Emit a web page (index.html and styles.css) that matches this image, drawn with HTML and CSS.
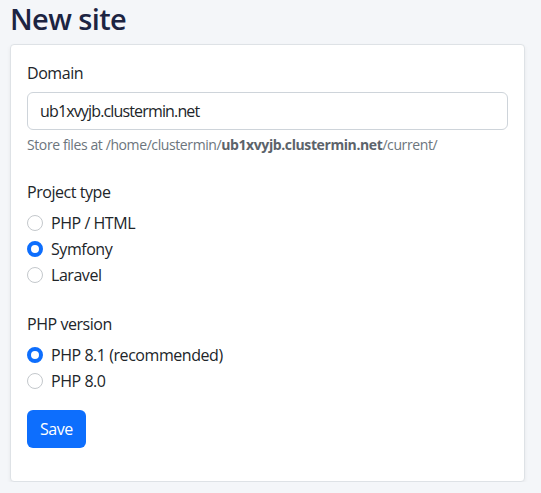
FILE: index.html
```html
<!DOCTYPE html>
<html>
<head>
    <title>New site</title>
    <link rel="stylesheet" href="styles.css">
</head>
<body>
    <h1 class="page-title">New site</h1>
    <div class="card">
        <form class="site-form">
            <div class="group">
                <label class="label" for="domain">Domain</label>
                <input class="input" id="domain" type="text" value="ub1xvyjb.clustermin.net">
                <div class="hint">Store files at /home/clustermin/<strong>ub1xvyjb.clustermin.net</strong>/current/</div>
            </div>
            <div class="group">
                <div class="label">Project type</div>
                <label class="check"><input type="radio" name="type"> PHP / HTML</label>
                <label class="check"><input type="radio" name="type" checked> Symfony</label>
                <label class="check"><input type="radio" name="type"> Laravel</label>
            </div>
            <div class="group last">
                <div class="label">PHP version</div>
                <label class="check"><input type="radio" name="php" checked> PHP 8.1 (recommended)</label>
                <label class="check"><input type="radio" name="php"> PHP 8.0</label>
            </div>
            <button type="button" class="btn">Save</button>
        </form>
    </div>
</body>
</html>
```

FILE: styles.css
```css
body {
    font-family: "Open Sans", "Noto Sans", sans-serif;
    font-size: 16px;
    letter-spacing: -0.45px;
    line-height: 1.5;
    margin: 0;
    padding: 2px 16px 0 10px;
    background-color: #f4f6f9;
    color: #212529;
}
.page-title {
    font-size: 29px;
    font-weight: 600;
    letter-spacing: -0.6px;
    line-height: 1.2;
    margin: 0 0 7px;
    color: #1c2442;
}
.card {
    background-color: #fff;
    border: 1px solid #dee2e6;
    border-radius: 4px;
    box-shadow: 0 2px 4px rgba(0, 0, 0, 0.06);
    padding: 16px;
}
.site-form {
    margin-bottom: 17px;
}
.group {
    margin-bottom: 25px;
}
.group.last {
    margin-bottom: 17px;
}
.label {
    display: block;
    margin-bottom: 7px;
}
.input {
    display: block;
    box-sizing: border-box;
    width: 100%;
    height: 38px;
    padding: 6px 12px;
    font: inherit;
    letter-spacing: -0.85px;
    color: #212529;
    border: 1px solid #ced4da;
    border-radius: 6px;
    outline: none;
}
.hint {
    margin-top: 4px;
    font-size: 14px;
    letter-spacing: -0.4px;
    color: #6c757d;
}
.hint strong {
    color: #5c636a;
}
.check {
    display: flex;
    align-items: center;
    min-height: 24px;
    margin-bottom: 2px;
}
.check input {
    appearance: none;
    width: 16px;
    height: 16px;
    margin: 0 8px 0 0;
    border: 1px solid #c4c8cc;
    border-radius: 50%;
    background-color: #fff;
}
.check input:checked {
    border: 4px solid #0d6efd;
}
.btn {
    font: inherit;
    letter-spacing: inherit;
    color: #fff;
    background-color: #0d6efd;
    border: none;
    border-radius: 6px;
    height: 38px;
    padding: 0 13px;
}
```
